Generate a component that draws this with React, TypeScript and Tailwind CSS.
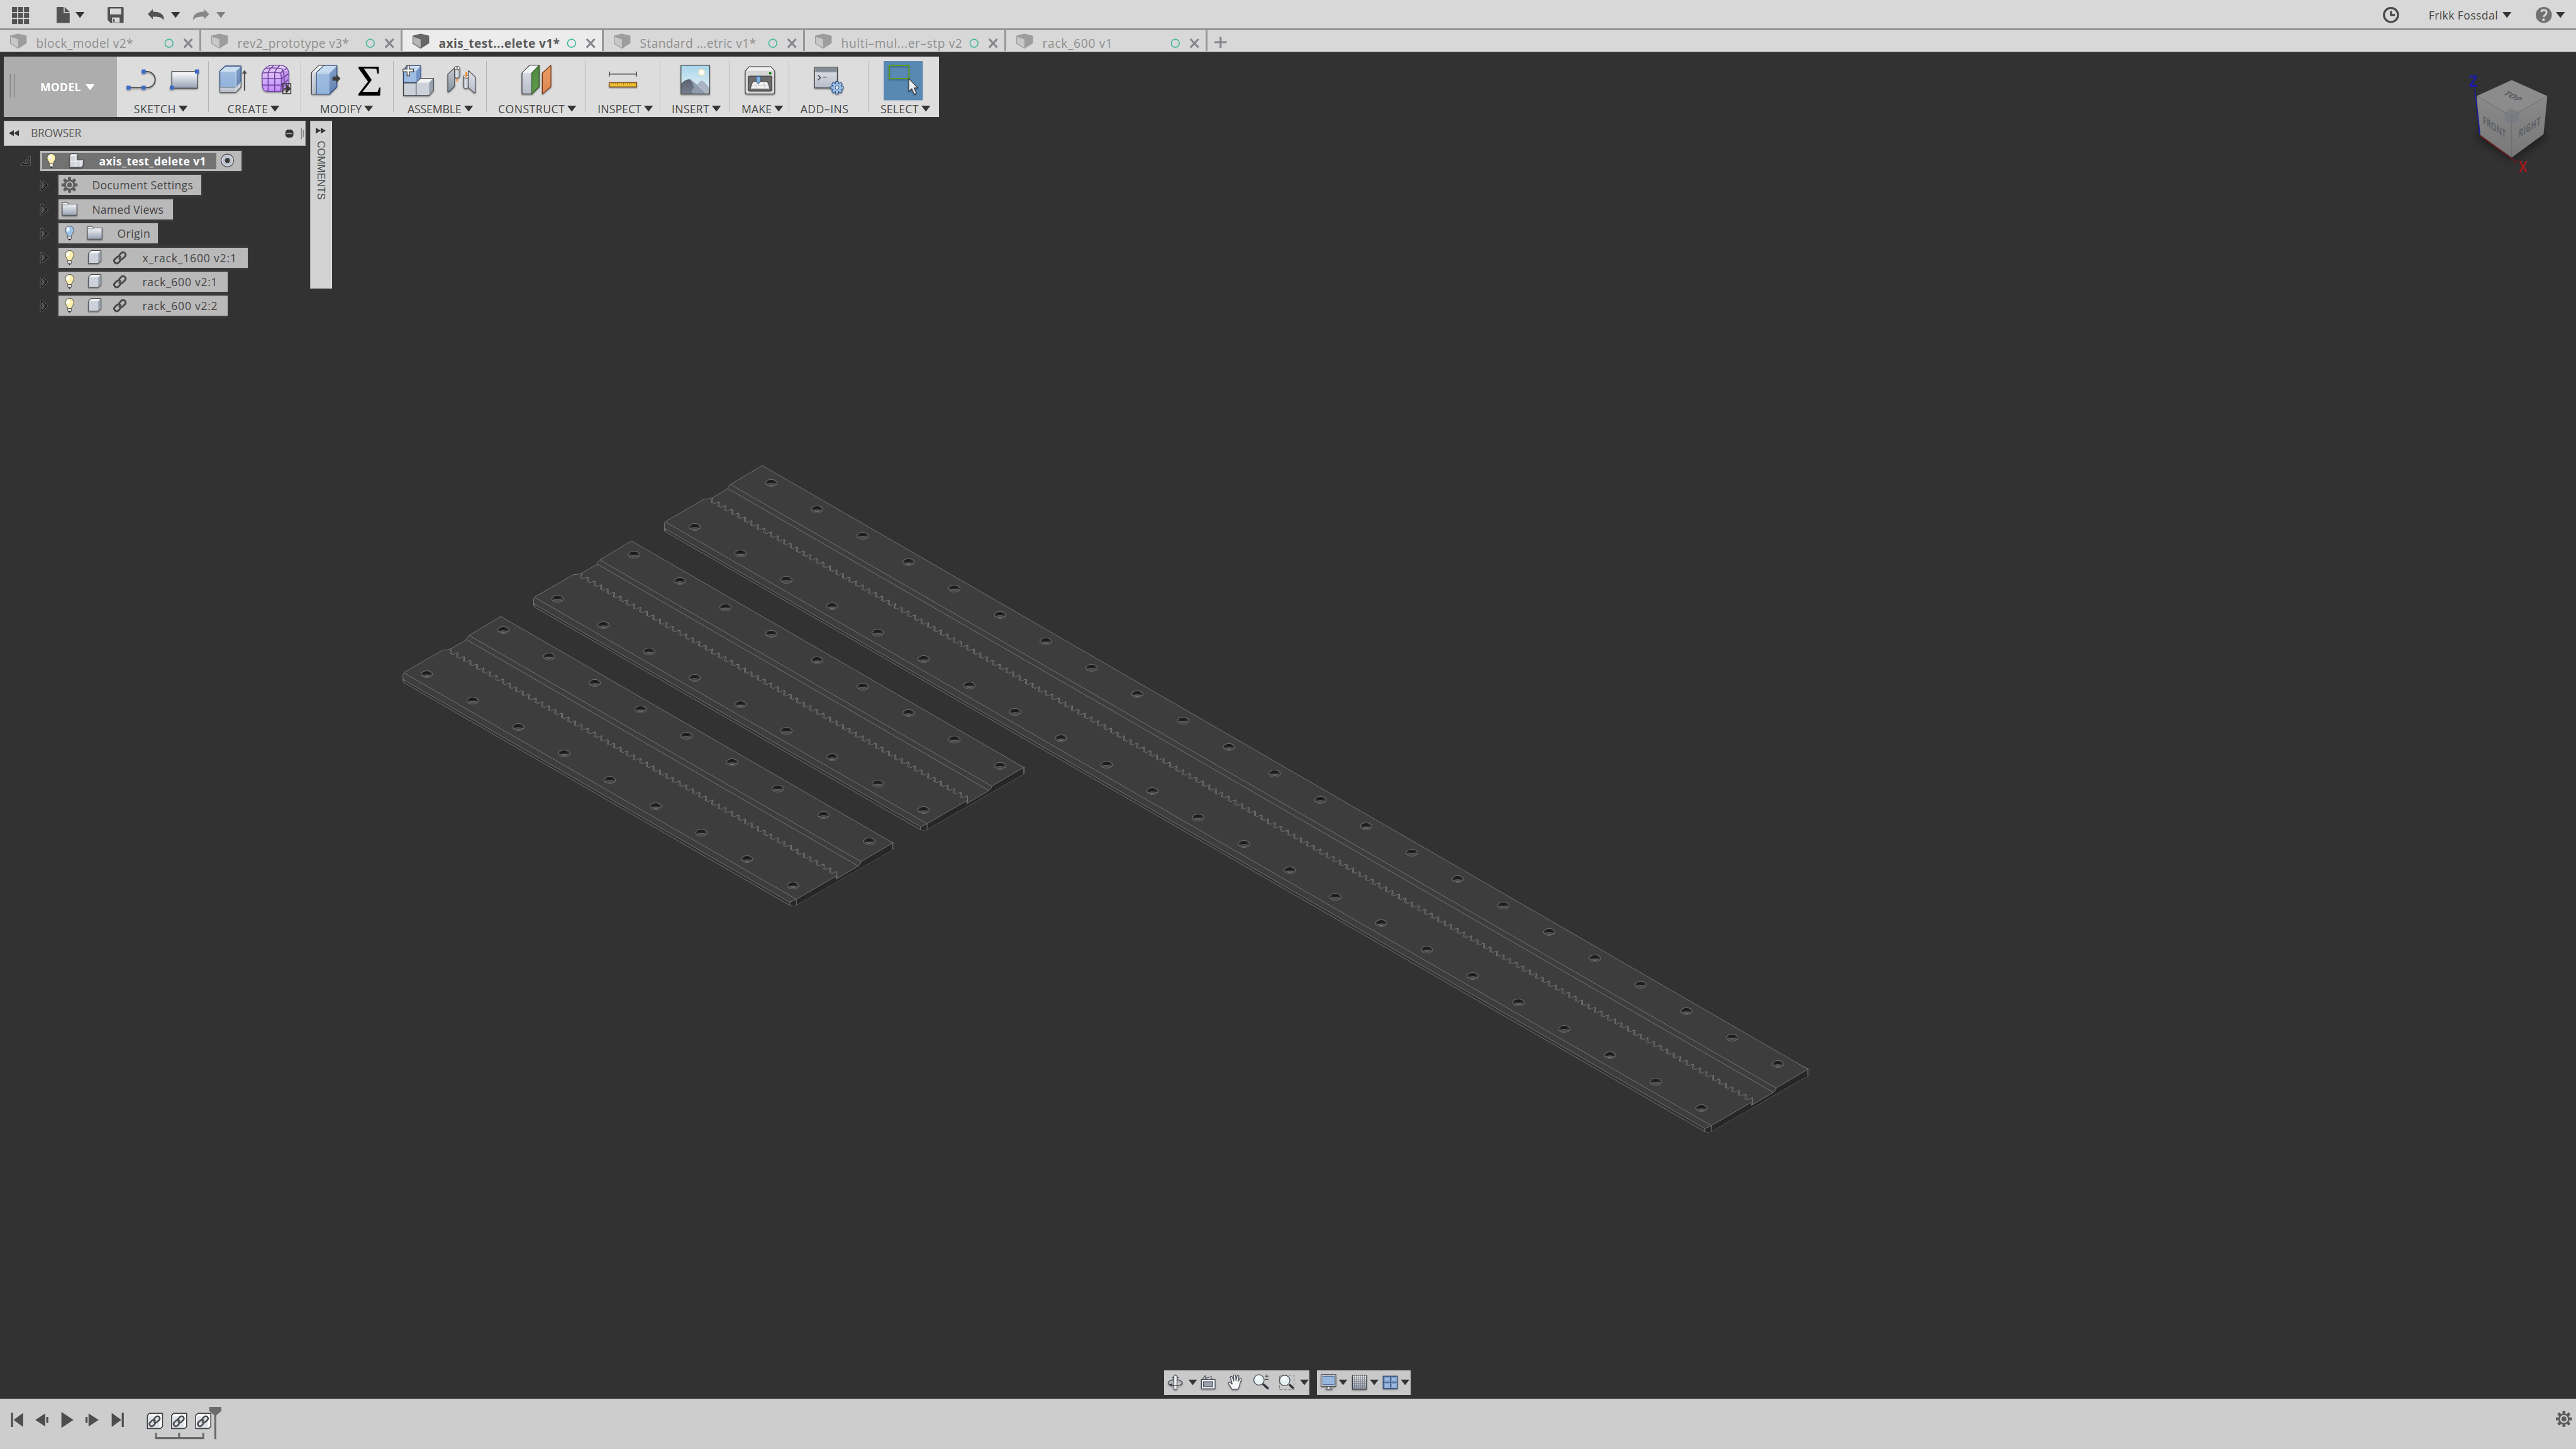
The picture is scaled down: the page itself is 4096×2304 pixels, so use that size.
import React, { useLayoutEffect, useRef, useState } from "react";

const K = 0.8;

/** Line drawing whose view box is given in design units. */
function Art({
  box,
  className = "",
  children,
}: {
  box: [number, number, number, number];
  className?: string;
  children: React.ReactNode;
}) {
  return (
    <svg
      className={"block shrink-0 overflow-visible " + className}
      width={box[2] * K}
      height={box[3] * K}
      viewBox={box.join(" ")}
      fill="none"
    >
      {children}
    </svg>
  );
}

/** Single-line label, tracked so that it is `w` design units wide. */
function Label({ w, className = "", children }: { w: number; className?: string; children: string }) {
  const ref = useRef<HTMLSpanElement>(null);
  const [track, setTrack] = useState(0);
  useLayoutEffect(() => {
    if (!ref.current) return;
    const natural = ref.current.getBoundingClientRect().width;
    setTrack((w * K - natural) / children.length);
  }, [w, children]);
  return (
    <span
      ref={ref}
      className={"inline-block shrink-0 whitespace-pre " + className}
      style={{ letterSpacing: track + "px" }}
    >
      {children}
    </span>
  );
}

function Caret({ className = "", color = "#353535" }: { className?: string; color?: string }) {
  return (
    <svg className={"block shrink-0 " + className} width="14.4" height="9.6" viewBox="0 0 18 12">
      <path d="M0 0H18L9 12Z" fill={color} />
    </svg>
  );
}

function Defs() {
  return (
    <svg className="absolute" width="0" height="0">
      <defs>
        <linearGradient id="steel" x1="0" y1="0" x2="0" y2="1">
          <stop offset="0" stopColor="#ffffff" />
          <stop offset="1" stopColor="#97a1b4" />
        </linearGradient>
        <linearGradient id="slab" x1="0" y1="0" x2="0" y2="1">
          <stop offset="0" stopColor="#e2e3e8" />
          <stop offset="1" stopColor="#b6bccb" />
        </linearGradient>
        <linearGradient id="slabDark" x1="0" y1="0" x2="0" y2="1">
          <stop offset="0" stopColor="#c9ced6" />
          <stop offset="1" stopColor="#83909c" />
        </linearGradient>
        <linearGradient id="blue" x1="0" y1="0" x2="0" y2="1">
          <stop offset="0" stopColor="#a5c0df" />
          <stop offset="1" stopColor="#92b3dc" />
        </linearGradient>
        <linearGradient id="blueSide" x1="0" y1="0" x2="0" y2="1">
          <stop offset="0" stopColor="#7f9fc9" />
          <stop offset="1" stopColor="#6583b0" />
        </linearGradient>
        <linearGradient id="purple" x1="0" y1="0" x2="0" y2="1">
          <stop offset="0" stopColor="#e6d4f6" />
          <stop offset="1" stopColor="#c58bff" />
        </linearGradient>
        <linearGradient id="green" x1="0" y1="0" x2="0" y2="1">
          <stop offset="0" stopColor="#4f8a41" />
          <stop offset="1" stopColor="#5f9a4b" />
        </linearGradient>
        <linearGradient id="orange" x1="0" y1="0" x2="0" y2="1">
          <stop offset="0" stopColor="#eb9d66" />
          <stop offset="1" stopColor="#dd8750" />
        </linearGradient>
        <linearGradient id="sky" x1="0" y1="0" x2="0" y2="1">
          <stop offset="0" stopColor="#a9d5ea" />
          <stop offset="1" stopColor="#e9f3f6" />
        </linearGradient>
        <linearGradient id="rock" x1="0" y1="0" x2="0" y2="1">
          <stop offset="0" stopColor="#5b6270" />
          <stop offset="1" stopColor="#767d8c" />
        </linearGradient>
        <linearGradient id="pin" x1="0" y1="0" x2="1" y2="0">
          <stop offset="0" stopColor="#8b96a1" />
          <stop offset="0.4" stopColor="#e6eaef" />
          <stop offset="1" stopColor="#9aa3ad" />
        </linearGradient>
        <linearGradient id="hole" x1="0" y1="0" x2="1" y2="0">
          <stop offset="0" stopColor="#3a3a3a" />
          <stop offset="0.3" stopColor="#1c1c1c" />
          <stop offset="0.65" stopColor="#1c1c1c" />
          <stop offset="1" stopColor="#404040" />
        </linearGradient>
        <linearGradient id="twist" x1="0" y1="0" x2="1" y2="0">
          <stop offset="0" stopColor="#6a6a6a" />
          <stop offset="1" stopColor="#222222" />
        </linearGradient>
        <linearGradient id="cubeLeft" x1="0" y1="0" x2="0" y2="1">
          <stop offset="0" stopColor="#8a8a8a" />
          <stop offset="1" stopColor="#787878" />
        </linearGradient>
        <radialGradient id="lens" cx="0.4" cy="0.3" r="0.8">
          <stop offset="0" stopColor="#ffffff" />
          <stop offset="0.5" stopColor="#e2efef" />
          <stop offset="1" stopColor="#f6fbfb" />
        </radialGradient>
        <filter id="drop" x="-20%" y="-20%" width="150%" height="150%">
          <feDropShadow dx="0" dy="2" stdDeviation="1.4" floodColor="#000" floodOpacity="0.4" />
        </filter>
        <filter id="soft" x="-40%" y="-40%" width="180%" height="180%">
          <feGaussianBlur stdDeviation="9" />
        </filter>
      </defs>
    </svg>
  );
}

/* ---------- application bar ---------- */

function AppBar() {
  return (
    <header className="flex h-[48px] items-center border-b-[3.2px] border-[#969696] bg-[#d8d8d8] pt-[3.2px] pl-[19.2px]">
      <Art box={[24, 12, 34, 34]}>
        {[0, 12, 24].map((y) =>
          [0, 12, 24].map((x) => (
            <rect key={x + "-" + y} x={24 + x} y={12 + y} width="10" height="10" fill="#535353" />
          )),
        )}
      </Art>
      <Art box={[112, 14, 26, 32]} className="ml-[43.2px]">
        <path d="M112 14H126V26H138V46H112Z" fill="#535353" />
        <path d="M128 14L138 24H128Z" fill="#535353" />
      </Art>
      <Caret className="ml-[9.6px]" />
      <Art box={[214, 14, 32, 32]} className="ml-[36.8px]">
        <path
          fillRule="evenodd"
          d="M216 14H244Q246 14 246 16V44Q246 46 244 46H220L214 40V16Q214 14 216 14ZM219 17V29H241V17ZM223 35V45H238V35Z"
          fill="#535353"
        />
        <rect x="225" y="38" width="3" height="6" fill="#535353" />
      </Art>
      <Art box={[294, 16, 33, 28]} className="ml-[38.4px]">
        <path d="M294 28L304 18V23C319 23 327 29 326 40C322 34 317 33 304 33V38Z" fill="#535353" />
      </Art>
      <Caret className="ml-[10.4px]" />
      <Art box={[384, 16, 33, 28]} className="ml-[20.8px]">
        <path d="M416 28L406 18V23C392 23 383 29 384 40C388 34 393 33 406 33V38Z" fill="#868686" />
      </Art>
      <Caret className="ml-[10.4px]" color="#7f7f7f" />
      <div className="ml-auto flex items-center pr-[17.6px]">
        <Art box={[4736, 14, 32, 32]}>
          <circle cx="4752" cy="30" r="14" stroke="#484848" strokeWidth="4" />
          <path d="M4752 22V30H4760" stroke="#484848" strokeWidth="4" />
        </Art>
        <Label w={138} className="ml-[47.2px] text-[17.6px] leading-[24px] text-[#444444]">
          Frikk Fossdal
        </Label>
        <Caret className="ml-[7.2px]" />
        <Art box={[5040, 14, 32, 32]} className="ml-[38.4px]">
          <circle cx="5056" cy="30" r="16" fill="#707271" />
          <path
            d="M5051 24C5052 18.500 5062 19 5061.500 25.500C5061 30 5056.500 29.500 5056 34"
            stroke="#d8d8d8"
            strokeWidth="3.600"
          />
          <circle cx="5055.500" cy="39.500" r="2.600" fill="#d8d8d8" />
        </Art>
        <Caret className="ml-[6.4px]" />
      </div>
    </header>
  );
}

const tabs: { name: string; w: number; active?: boolean }[] = [
  { name: "block_model v2*", w: 193 },
  { name: "rev2_prototype v3*", w: 222 },
  { name: "axis_test...elete v1*", w: 241, active: true },
  { name: "Standard ...etric v1*", w: 231 },
  { name: "hulti–mul...er–stp v2", w: 241 },
  { name: "rack_600 v1", w: 140 },
];

function Tabs() {
  return (
    <nav className="flex h-[35.2px] border-b-[0.8px] border-white bg-[#d8d8d8]">
      {tabs.map((t) => (
        <div
          key={t.name}
          className={
            "flex w-[320px] shrink-0 border-r-[3.2px] border-b-[0.8px] border-[#969696] " +
            (t.active ? "bg-[#ececec]" : "")
          }
        >
          <Art box={[0, 60, 70, 42]}>
            {t.active ? (
              <>
                <path d="M20 71L36 67L53 71V86L36 97L20 87Z" fill="#666666" />
                <path d="M21.500 73L36 78V95L21.500 86Z" fill="#b3b6b5" />
              </>
            ) : (
              <>
                <path d="M20 71L36 67L53 71V86L36 97L20 87Z" fill="#9d9d9d" />
                <path d="M21.500 73L36 78V95L21.500 86Z" fill="#c6c9c8" />
              </>
            )}
          </Art>
          <Label
            w={t.w}
            className={
              "ml-[1.6px] h-[34px] pt-[8px] text-[19.2px] leading-[26px] " +
              (t.active ? "font-bold text-[#5a5a5a]" : "text-[#8e8e8e]")
            }
          >
            {t.name}
          </Label>
          <Art box={[320, 60, 76, 42]} className="ml-auto">
            <circle cx="336" cy="86" r="8" stroke="#45b99c" strokeWidth="2" />
            <path d="M366 77.500L382 94.500M382 77.500L366 94.500" stroke="#87868d" strokeWidth="4" />
          </Art>
        </div>
      ))}
      <div className="flex flex-1 border-b-[0.8px] border-[#969696]">
        <Art box={[2400, 60, 50, 42]}>
          <path d="M2414 84H2438M2426 73V95" stroke="#87868d" strokeWidth="4" />
        </Art>
      </div>
    </nav>
  );
}

/* ---------- ribbon ---------- */

function Group({
  x,
  end,
  label,
  lx,
  lw,
  last,
  noCaret,
  children,
}: {
  x: number;
  end: number;
  label: string;
  lx: number;
  lw: number;
  last?: boolean;
  noCaret?: boolean;
  children: React.ReactNode;
}) {
  return (
    <div
      className={
        "my-[7.2px] flex h-[81.6px] shrink-0 flex-col " + (last ? "" : "border-r-[1.6px] border-[#b4b4b4]")
      }
      style={{ width: (end - x) * K }}
    >
      <Art box={[x, 121, end - x - 2, 78]}>{children}</Art>
      <div className="mt-[5.6px] flex h-[17.6px] items-center" style={{ paddingLeft: (lx - x) * K }}>
        <Label w={lw} className="text-[17.6px] leading-[17.6px] text-[#444444]">
          {label}
        </Label>
        {!noCaret && <Caret className="-mt-[1.6px] ml-[4px]" />}
      </div>
    </div>
  );
}

function GearShape({ cx, cy, r, fill, stroke }: { cx: number; cy: number; r: number; fill: string; stroke?: string }) {
  return (
    <g transform={`translate(${cx} ${cy}) scale(${r / 16})`} fill={fill} stroke={stroke} strokeWidth={stroke ? 2 : 0}>
      {stroke && (
        <g>
          {[0, 45, 90, 135, 180, 225, 270, 315].map((a) => (
            <rect key={a} x="-3.500" y="-16" width="7" height="9" rx="2" transform={`rotate(${a})`} />
          ))}
        </g>
      )}
      <circle r="11" />
      <g stroke="none">
        {[0, 45, 90, 135, 180, 225, 270, 315].map((a) => (
          <rect key={a} x="-3" y={stroke ? -15 : -16} width="6" height="9" rx="1.500" transform={`rotate(${a})`} />
        ))}
      </g>
    </g>
  );
}

function Ribbon() {
  return (
    <div className="mt-[6.4px] ml-[6.4px] flex h-[96px] w-[1486.4px] bg-[#dddddd]">
      <div className="flex w-[179.2px] shrink-0 items-center bg-[#adadad]">
        <Art box={[8, 148, 24, 46]} className="mt-[-1.6px]">
          <path d="M21 148V194M29 148V194" stroke="#878787" strokeWidth="2" />
        </Art>
        <Label w={81} className="ml-[38.4px] pt-[1.6px] text-[17.6px] leading-[24px] font-bold text-white">
          MODEL
        </Label>
        <Caret className="mt-[2.4px] ml-[7.2px]" color="#ffffff" />
      </div>

      <Group x={232} end={415} label="SKETCH" lx={266} lw={84}>
        <g filter="url(#drop)">
          <path d="M285 142H292A16 16 0 0 1 292 174H255" stroke="#484848" strokeWidth="2.200" />
          <path d="M251 170h8v8h-8zM281 170h8v8h-8zM281 138h8v8h-8z" fill="#3b6bc8" />
        </g>
        <g filter="url(#drop)">
          <rect x="341" y="142" width="51" height="33" fill="url(#steel)" stroke="#484848" strokeWidth="1.600" />
          <path d="M387 138h8v8h-8zM337 170h8v8h-8z" fill="#3b6bc8" />
        </g>
      </Group>

      <Group x={415} end={599} label="CREATE" lx={452} lw={81}>
        <g filter="url(#drop)" strokeLinejoin="round">
          <path d="M437 173H469L479 163V173L469 183H437Z" fill="url(#slab)" stroke="#484848" strokeWidth="1.400" />
          <path d="M437 141L448 131H479V163L469 173H437Z" fill="url(#blue)" />
          <path d="M437 141L448 131H479L469 141Z" fill="#cbdff2" />
          <path d="M469 141L479 131V163L469 173Z" fill="url(#blueSide)" />
          <path d="M437 173V141L448 131H479V164" stroke="#29467c" strokeWidth="1.600" />
          <path d="M438 142H469V173M469 141L478 132" stroke="#dfeaf6" strokeWidth="1.200" />
          <path d="M469 173V183M469 173L479 163" stroke="#f2f3f6" strokeWidth="1" />
        </g>
        <path d="M486 180V145" stroke="#484848" strokeWidth="2.400" />
        <path d="M481 146L486 139L491 146Z" fill="#484848" />
        <g filter="url(#drop)">
          <path
            d="M521 150C521 140 530 129.500 541 129.500H557C567 129.500 574 136 574 147V163C574 174 564 181.500 554 181.500H533C525 181.500 521.500 178 521.500 169Z"
            fill="url(#purple)"
            stroke="#6f45a0"
            strokeWidth="1.600"
          />
          <path d="M560 142L573 140V166L562 176L560 160Z" fill="#a873dd" opacity="0.550" />
          <path
            d="M533 144V181M546 144V181M522 156H560L574 146M521 169H560L573 158M523 145Q540 142 558 145Q561 160 558 180M558 145Q563 138 571 136M533 144Q536 136 544 130M546 144Q549 136 556 130M528 136Q548 133 561 137Q567 150 564 174"
            stroke="#6f45a0"
            strokeWidth="2"
          />
        </g>
        <rect x="562" y="166" width="16" height="20" stroke="#3d3d3d" strokeWidth="2" />
        <path d="M561 176H569V168L577 176L569 184V176" fill="#3d3d3d" stroke="#3d3d3d" strokeWidth="2" />
      </Group>

      <Group x={599} end={783} label="MODIFY" lx={636} lw={83}>
        <g filter="url(#drop)" strokeLinejoin="round">
          <path d="M619.500 144L634 130H645L629 144V187H619.500Z" fill="url(#slab)" />
          <path d="M619.500 144L634 130H645L629 144Z" fill="#f1f2f3" />
          <path d="M629 144L645 130H670V172L655 187H629Z" fill="url(#blue)" />
          <path d="M629 144L645 130H670L655 144Z" fill="#c6dbef" />
          <path d="M655 144L670 130V172L655 187Z" fill="url(#blueSide)" />
          <path d="M629 187H619.500V144L634 130H644" stroke="#484848" strokeWidth="1.400" />
          <path d="M629 187V144L644 130H670V172L655 187Z" stroke="#223c70" strokeWidth="1.400" />
          <path d="M630 145H655L669 131" stroke="#e3eef8" strokeWidth="1.200" />
        </g>
        <path d="M661 152H668.500V147L677 156L668.500 165V160H661Z" fill="#3d3d3d" />
        <text
          x="709"
          y="190"
          fontSize="87"
          textLength="52"
          lengthAdjust="spacingAndGlyphs"
          fill="#000"
          fontFamily="'Liberation Serif', serif"
        >
          Σ
        </text>
      </Group>

      <Group x={783} end={967} label="ASSEMBLE" lx={810} lw={107}>
        <g filter="url(#drop)" strokeLinejoin="round">
          <path d="M802.500 141L809 130.500H836.500V155L828 164H802.500Z" fill="#9dbbe3" stroke="#223c70" strokeWidth="1.500" />
          <path d="M803 141L812 131H836L828 141Z" fill="#cadef1" />
          <path d="M828 141L836 131V155L828 163.500Z" fill="#7593c4" />
          <path
            d="M802.500 164.500H828L836 155.500H862V180L853.500 189.500H802.500Z"
            fill="#cbd0d9"
            stroke="#3c3c3c"
            strokeWidth="1.500"
          />
          <path d="M828 164L837 156H861L853 164Z" fill="#f2f3f5" />
          <path d="M853.500 164L861.500 156V180L853.500 189Z" fill="#96a1ab" />
          <path d="M827.500 165V189" stroke="#3c3c3c" strokeWidth="1.500" />
        </g>
        <path
          d="M809.500 129.500H814.500V137H822.500V142.500H814.500V150.500H809.500V142.500H801.500V137H809.500Z"
          fill="#f4f4f4"
          stroke="#3c3c3c"
          strokeWidth="1.500"
        />
        <g filter="url(#drop)" strokeLinejoin="round">
          <path d="M890.500 147.500L904 134.500V171L893 182H890.500Z" fill="url(#slabDark)" stroke="#484848" strokeWidth="1.400" />
          <path d="M931.500 140L945.500 153V184L943 184L931.500 174Z" fill="url(#slab)" stroke="#484848" strokeWidth="1.400" />
          <path d="M903.500 135V152Q909 158 914.500 152V135Z" fill="url(#pin)" stroke="#484848" strokeWidth="1.200" />
          <ellipse cx="909" cy="135" rx="5.500" ry="3.500" fill="#eceff1" stroke="#484848" strokeWidth="1.200" />
          <circle cx="909" cy="135" r="1.300" fill="#222" />
          <path d="M921.500 152V173Q927 179 932 173V152Z" fill="url(#pin)" stroke="#484848" strokeWidth="1.200" />
          <ellipse cx="927" cy="152" rx="5.300" ry="3" fill="#eceff1" stroke="#484848" strokeWidth="1.200" />
        </g>
        <path d="M909 156V162M927 143V153" stroke="#ff7a00" strokeWidth="2.200" />
      </Group>

      <Group x={967} end={1165} label="CONSTRUCT" lx={990} lw={133}>
        <g filter="url(#drop)" strokeLinejoin="round">
          <path d="M1037 145L1052 129.500H1071V172L1056.500 186.500H1037Z" fill="url(#slab)" stroke="#3c3c3c" strokeWidth="1.500" />
          <path d="M1038 144.500L1052.500 130.500H1070L1056 144.500Z" fill="#f3f4f5" />
          <path d="M1056.500 145L1071 129.500V172L1056.500 186.500Z" fill="url(#green)" stroke="#2c5422" strokeWidth="1.500" />
          <path d="M1077.500 145L1094.500 129.500V172L1077.500 186.500Z" fill="url(#orange)" stroke="#78371a" strokeWidth="1.500" />
        </g>
      </Group>

      <Group x={1165} end={1313} label="INSPECT" lx={1188} lw={87}>
        <path d="M1211 142V152M1265 142V152M1211 147H1265" stroke="#484848" strokeWidth="2" />
        <g filter="url(#drop)">
          <rect x="1211" y="163.500" width="54.500" height="9" fill="#e9c130" stroke="#78371a" strokeWidth="1.500" />
          <path
            d="M1215 164v2M1219 164v2M1223 164v2M1227 164v4M1231 164v2M1235 164v2M1239 164v4M1243 164v2M1247 164v2M1251 164v4M1255 164v2M1259 164v2M1262 164v2"
            stroke="#78371a"
            strokeWidth="1"
          />
        </g>
      </Group>

      <Group x={1313} end={1451} label="INSERT" lx={1335} lw={75}>
        <g filter="url(#drop)">
          <rect x="1354" y="129.500" width="57" height="57" fill="url(#sky)" />
          <circle cx="1395" cy="143.500" r="6.500" fill="#fbe9a0" />
          <circle cx="1395" cy="143.500" r="4.800" fill="#ffffff" />
          <path d="M1385 170Q1392 159 1396 160Q1402 162 1411 176V186.500H1385Z" fill="#a9b3c1" />
          <path d="M1354 166Q1366 155 1373 158Q1381 162 1405 186.500H1354Z" fill="url(#rock)" />
          <path d="M1373 158Q1381 162 1405 186.500H1380Q1370 182 1380 174Q1378 166 1373 158Z" fill="#8f9aac" />
          <path d="M1373 158Q1381 162 1405 186.500" stroke="#e2e6ea" strokeWidth="1" />
          <rect x="1354" y="129.500" width="57" height="57" stroke="#484848" strokeWidth="1.600" />
        </g>
      </Group>

      <Group x={1451} end={1569} label="MAKE" lx={1474} lw={60}>
        <g filter="url(#drop)" strokeLinejoin="round">
          <path
            d="M1489 132.500H1532L1539.500 141V183Q1539.500 186.500 1536 186.500H1485Q1481 186.500 1481 183V141Z"
            fill="#d6d6d6"
            stroke="#484848"
            strokeWidth="1.500"
          />
          <path d="M1489 133.500H1532L1538 140.500H1483Z" fill="#f1f1f1" />
          <rect x="1487" y="151" width="47" height="30" rx="3" fill="#6b6b6b" stroke="#333" strokeWidth="1.500" />
          <path d="M1496 162H1525L1530 176.500H1491Z" fill="#f1f1f1" stroke="#333" strokeWidth="1" />
          <path d="M1494 169H1527M1505 162L1503 176M1518 162L1520 176" stroke="#bdbdbd" strokeWidth="1" />
          <path d="M1503 151.500H1511V161L1507 167L1503 161Z" fill="#82b2d6" stroke="#27549a" strokeWidth="1.200" />
          <circle cx="1530.500" cy="145.500" r="2.600" fill="#117a11" />
        </g>
      </Group>

      <Group x={1569} end={1727} label="ADD–INS" lx={1591} lw={96} noCaret>
        <g filter="url(#drop)">
          <rect x="1619.500" y="133.500" width="45" height="41" fill="url(#slab)" stroke="#3c3c3c" strokeWidth="1.500" />
          <rect x="1620.500" y="134.500" width="43" height="7" fill="#818b97" />
          <path d="M1619.500 142.500H1664.500" stroke="#3c3c3c" strokeWidth="1.200" />
          <path d="M1626 149L1631 154L1626 159M1636 153H1643" stroke="#3c3c3c" strokeWidth="1.800" />
        </g>
        <g filter="url(#drop)">
          <GearShape cx={1664} cy={174} r={12.5} fill="#9fc0e8" stroke="#2c4a7c" />
          <circle cx="1664" cy="174" r="3.600" fill="#eef1f4" stroke="#2c4a7c" strokeWidth="1.200" />
        </g>
      </Group>

      <Group x={1727} end={1866} label="SELECT" lx={1750} lw={76} last>
        <rect x="1757" y="121" width="78" height="78" rx="1.500" fill="#5889b3" />
        <g filter="url(#drop)">
          <rect x="1768" y="130" width="39.500" height="26" stroke="#5fa600" strokeWidth="2" />
        </g>
        <g filter="url(#drop)">
          <path
            d="M1807 156V181L1813 176L1818 187L1822 185L1817.500 174.500H1825Z"
            fill="#eceff2"
            stroke="#333"
            strokeWidth="1.300"
          />
        </g>
      </Group>
    </div>
  );
}

/* ---------- browser ---------- */

function Slot({ children }: { children: React.ReactNode }) {
  return <Art box={[0, 0, 50, 40]}>{children}</Art>;
}

function Bulb({ lit = true }: { lit?: boolean }) {
  return (
    <Slot>
      <path d="M18.500 25H25.500V31L22 33.500L18.500 31Z" fill="#e6e6e6" stroke="#3c3c3c" strokeWidth="1" />
      <path d="M19.500 31H24.500L22 34Z" fill="#111" />
      <path
        d="M22 5.500A8.500 8.500 0 0 1 30.500 14C30.500 19 26 20.500 26 25.500H18C18 20.500 13.500 19 13.500 14A8.500 8.500 0 0 1 22 5.500Z"
        fill={lit ? "#ffefb0" : "#9dc3ec"}
        stroke="#484848"
        strokeWidth="1.200"
      />
      <ellipse cx="19" cy="12" rx="3" ry="4.500" fill="#fff" opacity="0.900" />
    </Slot>
  );
}

function Folder() {
  return (
    <Slot>
      <g filter="url(#drop)">
        <path
          d="M7.500 7.500Q7.500 6.500 8.500 6.500H17L21 9.500H36.500V31.500H7.500Z"
          fill="url(#steel)"
          stroke="#484848"
          strokeWidth="1.300"
        />
        <path d="M8 11H19L21 9.500" stroke="#70757e" strokeWidth="1" />
      </g>
    </Slot>
  );
}

function Cube() {
  return (
    <Slot>
      <g filter="url(#drop)" strokeLinejoin="round">
        <path d="M9.500 11L15 5.500H34.500V25L29 30.500H9.500Z" fill="#cdd1db" stroke="#484848" strokeWidth="1.300" />
        <path d="M10.500 11L15.500 6.500H33.500L29 11Z" fill="#f4f5f6" />
        <path d="M29 11L34 6.500V25L29 30Z" fill="#9ba5b0" />
      </g>
    </Slot>
  );
}

function ChainPaths({ color, width }: { color: string; width: number }) {
  return (
    <g stroke={color} strokeWidth={width} strokeLinecap="round" strokeLinejoin="round">
      <path d="M20 16L24.500 10.500Q28.500 7 32 10.500Q35 14 32 17.500L27 22Q23.500 24 21 21.500" />
      <path d="M24 24L19.500 29.500Q15.500 33 12 29.500Q9 26 12 22.500L17 18Q20.500 16 23 18.500" />
    </g>
  );
}

function Link() {
  return (
    <Slot>
      <ChainPaths color="#484848" width={3.6} />
    </Slot>
  );
}

function Gear() {
  return (
    <Slot>
      <GearShape cx={22} cy={20} r={16} fill="#5e5e5e" />
      <circle cx="22" cy="20" r="6" stroke="#b9b9b9" strokeWidth="2.600" />
    </Slot>
  );
}

const rows: { name: string; w: number; chip: number; icons: React.ReactNode }[] = [
  { name: "Document Settings", w: 201, chip: 284, icons: <Gear /> },
  { name: "Named Views", w: 142, chip: 228, icons: <Folder /> },
  { name: "Origin", w: 66, chip: 198, icons: <><Bulb lit={false} /><Folder /></> },
  { name: "x_rack_1600 v2:1", w: 188, chip: 376, icons: <><Bulb /><Cube /><Link /></> },
  { name: "rack_600 v2:1", w: 150, chip: 336, icons: <><Bulb /><Cube /><Link /></> },
  { name: "rack_600 v2:2", w: 150, chip: 336, icons: <><Bulb /><Cube /><Link /></> },
];

function Browser() {
  return (
    <aside className="flex w-[480px] flex-col">
      <div className="flex h-[40px] items-center border-[1.6px] border-[#ababab] bg-[#d2d2d2] pl-[6.4px]">
        <Art box={[18, 259, 20, 12]}>
          <path d="M28 259V271L18 265ZM38 259V271L28 265Z" fill="#353535" />
        </Art>
        <Label w={100} className="-mt-[2px] ml-[19.2px] text-[17.6px] leading-[24px] text-[#5a5a5a]">
          BROWSER
        </Label>
        <Art box={[566, 252, 40, 26]} className="ml-auto">
          <rect x="567" y="257" width="16" height="16" rx="6" fill="#353535" />
          <path d="M569 265H581" stroke="#a5a5a5" strokeWidth="2" />
          <path d="M599 254V276M603 258V272" stroke="#848484" strokeWidth="2" />
        </Art>
      </div>
      <div className="mt-[4.8px] flex h-[38.4px]">
        <Art box={[8, 296, 70, 48]}>
          <path d="M45 327L59.500 313V327Z" fill="url(#twist)" stroke="#7a7a7a" strokeWidth="3.400" />
          <path d="M45 327L59.500 313V327Z" stroke="#000" strokeWidth="1.400" />
        </Art>
        <div className="flex items-center bg-[#3a3a3a] px-[1.6px]">
          <div className="flex h-[32px] w-[320px] items-center bg-[#b9b9b9] pl-[3.2px]">
            <div className="flex h-[25.6px] w-[276.8px] items-center bg-[#727272]">
              <div className="-ml-[3.2px] flex items-center">
                <Bulb />
                <Slot>
                  <g filter="url(#drop)" strokeLinejoin="round">
                    <path
                      d="M8.500 9L12 5.500H23.500V17.500H35.500V28L31 32.500H8.500Z"
                      fill="#d3d6dc"
                      stroke="#484848"
                      strokeWidth="1.200"
                    />
                    <path d="M9 21H20V32M20 21L23.500 17.500M20 21V9.500L23 6.500M9 9.500H20M20 21H31V32M31 21L35 18" stroke="#f6f7f8" strokeWidth="1.200" />
                  </g>
                </Slot>
                <Label w={213} className="ml-[13.6px] text-[17.6px] leading-[24px] font-bold text-white">
                  axis_test_delete v1
                </Label>
              </div>
            </div>
            <Art box={[430, 300, 50, 40]}>
              <circle cx="452" cy="319" r="12.500" fill="#d5dae3" stroke="#484848" strokeWidth="1.500" />
              <circle cx="452" cy="319" r="8" stroke="#b5bfce" strokeWidth="3" />
              <circle cx="452" cy="319" r="5.200" fill="#3d3d3d" />
            </Art>
          </div>
        </div>
      </div>
      {rows.map((r) => (
        <div key={r.name} className="flex h-[38.4px]">
          <Art box={[8, 344, 106, 48]}>
            <path d="M82 359.500H84.500L94.500 368.500L84.500 377.500H82Z" fill="url(#twist)" stroke="#757575" strokeWidth="3.600" />
            <path d="M82 359.500H84.500L94.500 368.500L84.500 377.500H82Z" fill="url(#twist)" stroke="#080808" strokeWidth="1.600" />
          </Art>
          <div className="flex items-center bg-[#3a3a3a] px-[1.6px]">
            <div className="flex h-[32px] items-center bg-[#b9b9b9]" style={{ width: r.chip * K }}>
              {r.icons}
              <Label w={r.w} className="ml-[13.6px] text-[17.6px] leading-[24px] text-[#444444]">
                {r.name}
              </Label>
            </div>
          </div>
        </div>
      ))}
    </aside>
  );
}

function Comments() {
  return (
    <aside className="ml-[6.4px] flex h-[267.2px] w-[35.2px] flex-col items-center border-[1.6px] border-[#ababab] border-r-[#e4e4e4] bg-[#d2d2d2]">
      <Art box={[628, 254, 20, 12]} className="mt-[10.4px]">
        <path d="M628 254V266L638 260ZM638 254V266L648 260Z" fill="#353535" />
      </Art>
      <span className="mt-[11.2px] text-[16px] leading-[18px] text-[#484848] [font-family:'Liberation_Sans',sans-serif] [writing-mode:vertical-rl]">
        COMMENTS
      </span>
    </aside>
  );
}

/* ---------- viewport ---------- */

function Rack({ x, y, len, holes, hx, hy }: { x: number; y: number; len: number; holes: number; hx: number; hy: number }) {
  const S = 1200 / 2078.5;
  const dx = len;
  const dy = len * S;
  const teeth = Math.round((len - 12) / 13);
  let rack = "M-99 64";
  for (let i = 0; i < teeth; i++) {
    rack += "l.700 2v7.500l1.300 1.500h4l2-2h4l1-1.500";
  }
  let inner = "";
  for (let i = 0; i < teeth; i++) {
    inner += `M${-99 + i * 13} ${64 + i * 7.505 + 1}l-1.800 4v4.500l1.800 1`;
  }
  const holeAt: [number, number][] = [];
  for (let i = 0; i < holes; i++) {
    holeAt.push([hx + i * 90.95, hy + i * 52.5]);
    holeAt.push([hx - 152 + i * 90.95, hy + 87.7 + i * 52.5]);
  }
  const edge = "#7c7c7c";
  return (
    <g transform={`translate(${x} ${y})`} strokeWidth="1.100">
      {/* underside and end face */}
      <path
        d={`M-194.500 125L-194 130.500L${dx - 205} ${dy + 124}L${dx - 198} ${dy + 125}L${dx - 192} ${dy + 123.500}L${dx} ${dy + 13}L${dx + 2} ${dy + 10}V${dy}Z`}
        fill="#303030"
        stroke={edge}
      />
      <path
        d={`M${dx - 205} ${dy + 118}V${dy + 123.500}L${dx - 198} ${dy + 125}L${dx - 192} ${dy + 123.500}L${dx} ${dy + 13}V${dy}L${dx - 63} ${dy + 37}L${dx - 110} ${dy + 58}L${dx - 192} ${dy + 112}Z`}
        fill="#262626"
      />
      {/* top face */}
      <path
        d={`M0 0L${dx} ${dy}L${dx - 63} ${dy + 37}L${dx - 65} ${dy + 42}L${dx - 69} ${dy + 46}L${dx - 113} ${dy + 72}V${dy + 66}L${dx - 192} ${dy + 112}L${dx - 205} ${dy + 118}L-194.500 125V114L-191 110.500L-115 66.500H-107L-99 64L-69 46.500L-67 42L-63 37.500Z`}
        fill="#3d3d3d"
        stroke={edge}
        strokeLinejoin="round"
      />
      <path
        d={`M-63 37.500L${dx - 63} ${dy + 37.500}M-68 46L${dx - 69} ${dy + 46}M-192.500 112L${dx - 192} ${dy + 112}V${dy + 123.500}M${dx - 205} ${dy + 118}V${dy + 123.500}`}
        stroke={edge}
      />
      <path d={`M-194.500 123L-192 126.500V130M${dx - 0.5} ${dy + 1}V${dy + 12.500}`} stroke={edge} />
      <path d={rack + "v14"} stroke={edge} />
      <path d={inner} stroke={edge} />
      {holeAt.map(([cx, cy]) => (
        <g key={cx} transform={`translate(${cx.toFixed(1)} ${cy.toFixed(1)})`}>
          <ellipse rx="11.700" ry="6.800" fill="url(#hole)" stroke={edge} />
          <path d="M-9.500 3.500Q-6 1.200 0 1.200Q6 1.200 9.500 3.500Q6 6.500 0 6.500Q-6 6.500 -9.500 3.500Z" fill="#444444" />
          <path d="M-9.500 3.500Q-6 1.200 0 1.200Q6 1.200 9.500 3.500M-4 5Q0 3.400 4 5" stroke={edge} />
        </g>
      ))}
    </g>
  );
}

function Model() {
  return (
    <svg className="pointer-events-none absolute inset-0 h-full w-full" viewBox="0 104 5120 2676" fill="none">
      <Rack x={1515} y={925.5} len={2078.5} holes={23} hx={18} hy={34.5} />
      <Rack x={1255.2} y={1075.5} len={779.4} holes={9} hx={5} hy={27} />
      <Rack x={995.4} y={1225.6} len={779.4} holes={9} hx={5} hy={27} />
    </svg>
  );
}

function ViewCube() {
  return (
    <div className="absolute top-[28.8px] right-0">
      <Art box={[4880, 140, 240, 220]}>
        <path d="M4922 272L4992 318L5062 272L5040 250H4940Z" fill="#000" opacity="0.450" filter="url(#soft)" />
        <path d="M4992.300 159L5063 191L4992.300 231L4922.500 191Z" fill="#8c8c8c" />
        <path d="M4922.500 191L4992.300 231V313L4929 268Z" fill="url(#cubeLeft)" />
        <path d="M5063 191L4992.300 231V313L5055.500 267Z" fill="url(#cubeLeft)" />
        <path d="M4922.500 191L4992.300 231L5063 191M4992.300 231V313" stroke="#6e6e6e" strokeWidth="1" />
        <path d="M4978 223L4992 215.500L5007 223V239L4992 248L4978 239Z" fill="#7a7c84" opacity="0.850" />
        <path d="M4978 223L4992.300 231L5007 223M4992.300 231V248" stroke="#6e7078" strokeWidth="1" />
        <g fontFamily="'Open Sans', sans-serif" fontWeight="700" fill="#5c5f66">
          <text transform="matrix(1 .52 -1 .52 4974.500 186.500)" fontSize="15" textLength="30" stroke="#5c5f66" strokeWidth=".500">
            TOP
          </text>
          <text transform="matrix(.61 .4 .03 1 4935 245.500)" fontSize="22" textLength="75">
            FRONT
          </text>
          <text transform="matrix(.61 -.38 -.02 1 5006 274)" fontSize="22" textLength="71">
            RIGHT
          </text>
        </g>
        <path d="M4919 177L4929 268" stroke="#1a1a9e" strokeWidth="2.200" />
        <path d="M4929 269L5003 323" stroke="#701a1e" strokeWidth="2.200" />
        <text x="4907.500" y="173" fontSize="31" textLength="17" lengthAdjust="spacingAndGlyphs" fontWeight="700" fill="#1a1aa2" fontFamily="'Open Sans', sans-serif">
          Z
        </text>
        <text x="5006" y="343" fontSize="31" textLength="17.500" lengthAdjust="spacingAndGlyphs" fontWeight="700" fill="#9c1a1c" fontFamily="'Open Sans', sans-serif">
          X
        </text>
      </Art>
    </div>
  );
}

function tri(x: number) {
  return <path d={`M${x} 2742.500H${x + 17}L${x + 8.5} 2753.500Z`} fill="#353535" />;
}

function ViewTools() {
  return (
    <div className="relative mt-auto mb-[6.4px] ml-[1851.2px] flex h-[38.4px] gap-[11.2px]">
      <div className="flex w-[231.2px] bg-[#c9c9c9]">
        <Art box={[2314, 2724, 69, 48]}>
          <g filter="url(#drop)">
            <path d="M2336 2742C2326 2743 2322 2746 2322 2749C2322 2752 2328 2754.500 2336 2754.500C2344 2754.500 2350.500 2752 2350.500 2749C2350.500 2746 2345 2743 2338 2742" stroke="#4a4f58" strokeWidth="1.600" />
            <path d="M2336.500 2732.500L2342 2738.500H2339.500V2761.500H2333.500V2738.500H2331Z" fill="#f0f2f4" stroke="#484c55" strokeWidth="1.300" />
            <path d="M2333 2754.500H2340" stroke="#4a4f58" strokeWidth="1.600" />
            <path d="M2325 2752.500L2330 2749V2756Z" fill="#333" />
          </g>
          {tri(2362.5)}
        </Art>
        <Art box={[2383, 2724, 44, 48]}>
          <g filter="url(#drop)">
            <path d="M2390 2742L2396 2734.500V2740L2408 2736.500V2742" fill="#d6d9dd" stroke="#4b4f57" strokeWidth="1.300" />
            <rect x="2388.500" y="2742" width="27" height="18.500" fill="#f4f5f7" stroke="#3e4350" strokeWidth="1.400" />
            <rect x="2392.500" y="2746.500" width="18.500" height="10" fill="#99a1ad" stroke="#3e4350" strokeWidth="1.300" />
          </g>
        </Art>
        <Art box={[2427, 2724, 54, 48]}>
          <g filter="url(#drop)">
            <path
              d="M2447 2761.500C2444 2757 2441 2752 2439.500 2749.500C2439 2747.500 2442 2747 2443.500 2748.500L2447 2751.500C2447 2747 2444.500 2741 2443.500 2737.500C2443.500 2735.500 2446 2735 2447 2737L2450.500 2745.500L2450 2734.500C2450.200 2732.200 2453.500 2732.200 2453.800 2734.500L2454.500 2745L2457 2735C2457.800 2733 2460.500 2733.500 2460.300 2735.500L2459 2746L2463 2740C2464.500 2738.500 2466.500 2740 2465.500 2742C2463 2748 2462 2750 2461.500 2754C2461 2757 2460.500 2759 2458 2761.500Z"
              transform="translate(1.500 0)"
              fill="#fafafa"
              stroke="#3f4450"
              strokeWidth="1.300"
              strokeLinejoin="round"
            />
          </g>
        </Art>
        <Art box={[2481, 2724, 52, 48]}>
          <path d="M2511 2752L2519.500 2759.500" stroke="#2e333b" strokeWidth="4.500" strokeLinecap="round" />
          <circle cx="2502" cy="2743" r="10.300" fill="url(#lens)" stroke="#4a4f58" strokeWidth="1.600" />
          <path d="M2514 2735.500H2521M2517.500 2732V2739M2514 2742H2521" stroke="#333" strokeWidth="1.200" />
        </Art>
        <Art box={[2533, 2724, 70, 48]}>
          <rect x="2543.500" y="2733.500" width="29" height="29" stroke="#5e5e5e" strokeWidth="1" strokeDasharray="6 3" />
          <path d="M2563 2752L2571.500 2760" stroke="#333" strokeWidth="4.500" />
          <circle cx="2554" cy="2744" r="10.300" fill="url(#lens)" stroke="#4a4f58" strokeWidth="1.600" />
          {tri(2584.5)}
        </Art>
      </div>
      <div className="flex w-[149.600px] bg-[#c9c9c9]">
        <Art box={[2617, 2724, 65, 48]}>
          <g filter="url(#drop)">
            <path d="M2634 2761.500L2638 2759V2755H2643V2759L2648 2761.500Z" fill="#e9eaec" stroke="#484c55" strokeWidth="1.200" />
            <rect x="2625.500" y="2732.500" width="29" height="23" fill="#f3f4f5" stroke="#3b3e46" strokeWidth="1.400" />
            <rect x="2628.500" y="2735.500" width="23" height="17" fill="#97b7dd" stroke="#2e4d82" strokeWidth="1.200" />
          </g>
          {tri(2660.5)}
        </Art>
        <Art box={[2682, 2724, 62, 48]}>
          <g filter="url(#drop)">
            <rect x="2687.500" y="2733.500" width="28" height="28" fill="url(#steel)" stroke="#333" strokeWidth="1.400" />
          </g>
          <path
            d="M2691.500 2734V2761M2695.500 2734V2761M2699.500 2734V2761M2703.500 2734V2761M2707.500 2734V2761M2711.500 2734V2761M2688 2737.500H2715M2688 2741.500H2715M2688 2745.500H2715M2688 2749.500H2715M2688 2753.500H2715M2688 2757.500H2715"
            stroke="#6b7079"
            strokeWidth="1"
          />
          {tri(2722.5)}
        </Art>
        <Art box={[2744, 2724, 60, 48]}>
          <g filter="url(#drop)">
            <rect x="2749.500" y="2735.500" width="28" height="24.500" fill="#9fbde2" stroke="#26406f" strokeWidth="1.600" />
            <path d="M2763.500 2735.500V2760M2749.500 2747.500H2777.500" stroke="#26406f" strokeWidth="1.600" />
            <path d="M2752 2738h9v7.500h-9zM2766 2738h9v7.500h-9zM2752 2750h9v7.500h-9zM2766 2750h9v7.500h-9z" stroke="#6383b4" strokeWidth="1" />
          </g>
          {tri(2784.5)}
        </Art>
      </div>
    </div>
  );
}

/* ---------- timeline ---------- */

function Step({ x }: { x: number }) {
  return (
    <g transform={`translate(${x} 0)`}>
      <path d="M1 2813L5 2809H31V2835L27 2839H1Z" fill="#ffffff" stroke="#3d3f47" strokeWidth="2" strokeLinejoin="round" />
      <rect x="3" y="2815" width="22" height="22" fill="#dfe1e8" />
      <g transform="translate(-4.500 2806.500) scale(.9)">
        <ChainPaths color="#484848" width={3.4} />
      </g>
    </g>
  );
}

function Timeline() {
  return (
    <footer className="flex h-[80px] items-start bg-[#cdcdcd] pt-[12.8px]">
      <Art box={[0, 2796, 60, 64]}>
        <path d="M22 2808H26V2836H22ZM46 2808V2836L27 2822Z" fill="#4d4d4d" />
      </Art>
      <Art box={[60, 2796, 50, 64]}>
        <path d="M90 2809V2835L70 2822ZM92 2816H96V2828H92Z" fill="#4d4d4d" />
      </Art>
      <Art box={[110, 2796, 50, 64]}>
        <path d="M122 2806L146 2822L122 2838Z" fill="#4d4d4d" />
      </Art>
      <Art box={[160, 2796, 50, 64]}>
        <path d="M170 2816H174V2828H170ZM176 2809V2835L196 2822Z" fill="#4d4d4d" />
      </Art>
      <Art box={[210, 2796, 60, 64]}>
        <path d="M222 2808V2836L241 2822ZM242 2808H246V2836H242Z" fill="#4d4d4d" />
      </Art>
      <Art box={[270, 2796, 180, 64]}>
        <Step x={292} />
        <Step x={340} />
        <Step x={388} />
        <path d="M310 2848V2858H404V2848M356 2848V2858" stroke="#6a6a6a" strokeWidth="4" />
        <path d="M416 2796H440V2804L430 2813V2860H426V2813L416 2804Z" fill="#6a6a6a" />
      </Art>
      <Art box={[5070, 2796, 50, 64]} className="ml-auto">
        <GearShape cx={5096} cy={2820} r={16} fill="#5c5c5c" />
        <circle cx="5096" cy="2820" r="6.500" stroke="#cdcdcd" strokeWidth="3" />
      </Art>
    </footer>
  );
}

export default function App() {
  return (
    <div className="relative flex h-[2304px] w-[4096px] flex-col overflow-hidden bg-[#323232] [font-family:'Open_Sans','Noto_Sans',sans-serif]">
      <Defs />
      <AppBar />
      <Tabs />
      <main className="relative flex flex-1 flex-col">
        <Model />
        <Ribbon />
        <div className="mt-[6.4px] ml-[6.4px] flex items-start">
          <Browser />
          <Comments />
        </div>
        <ViewCube />
        <ViewTools />
      </main>
      <Timeline />
    </div>
  );
}
